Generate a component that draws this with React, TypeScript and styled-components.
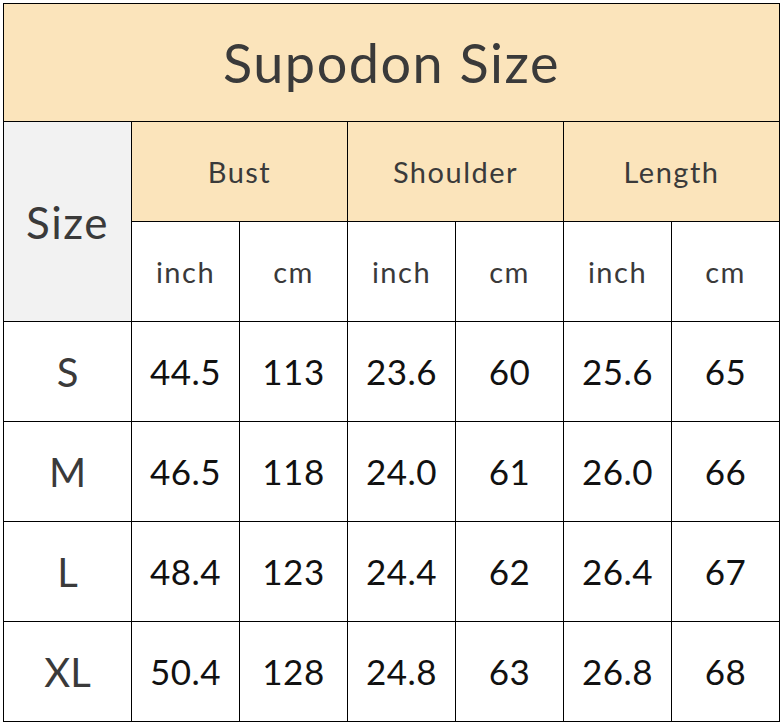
import React from "react";
import styled, { createGlobalStyle } from "styled-components";

const Global = createGlobalStyle`
  html, body { margin: 0; padding: 0; background: #ffffff; }
  body { padding: 3px; font-family: Lato, "Open Sans", sans-serif; }
`;

const Grid = styled.div`
  display: grid;
  grid-template-columns: 127px repeat(6, 107px);
  grid-template-rows: 117px repeat(6, 99px);
  gap: 1px;
  padding: 1px;
  background: #000;
  width: max-content;
`;

const Cell = styled.div<{
  $bg?: string;
  $span?: number;
  $rows?: number;
  $size?: number;
  $color?: string;
  $weight?: number;
  $spacing?: number;
}>`
  background: ${(p) => p.$bg ?? "#ffffff"};
  grid-column: span ${(p) => p.$span ?? 1};
  grid-row: span ${(p) => p.$rows ?? 1};
  display: flex;
  align-items: center;
  justify-content: center;
  font-size: ${(p) => p.$size ?? 36}px;
  color: ${(p) => p.$color ?? "#111"};
  font-weight: ${(p) => p.$weight ?? 400};
  letter-spacing: ${(p) => p.$spacing ?? 0}px;
  line-height: 1;
`;

const HEAD = "#fbe4bb";
const DARK = "#3a3a3a";

const rows = [
  ["S", "44.5", "113", "23.6", "60", "25.6", "65"],
  ["M", "46.5", "118", "24.0", "61", "26.0", "66"],
  ["L", "48.4", "123", "24.4", "62", "26.4", "67"],
  ["XL", "50.4", "128", "24.8", "63", "26.8", "68"],
];

export default function App() {
  return (
    <>
      <Global />
      <Grid>
        <Cell $bg={HEAD} $span={7} $size={54} $color={DARK} $spacing={1.5}>
          Supodon Size
        </Cell>
        <Cell $bg="#f2f2f2" $rows={2} $size={44} $color={DARK} $spacing={1.5}>
          Size
        </Cell>
        {["Bust", "Shoulder", "Length"].map((h) => (
          <Cell key={h} $bg={HEAD} $span={2} $size={29} $color={DARK} $spacing={1.5}>
            {h}
          </Cell>
        ))}
        {["inch", "cm", "inch", "cm", "inch", "cm"].map((u, i) => (
          <Cell key={i} $size={29} $color={DARK} $spacing={1.5}>
            {u}
          </Cell>
        ))}
        {rows.map((r) =>
          r.map((v, i) => (
            <Cell
              key={r[0] + i}
              $size={i === 0 ? 40 : 35}
              $color={i === 0 ? DARK : "#111"}
              $spacing={i === 0 ? 0 : 0.5}
            >
              {v}
            </Cell>
          ))
        )}
      </Grid>
    </>
  );
}
